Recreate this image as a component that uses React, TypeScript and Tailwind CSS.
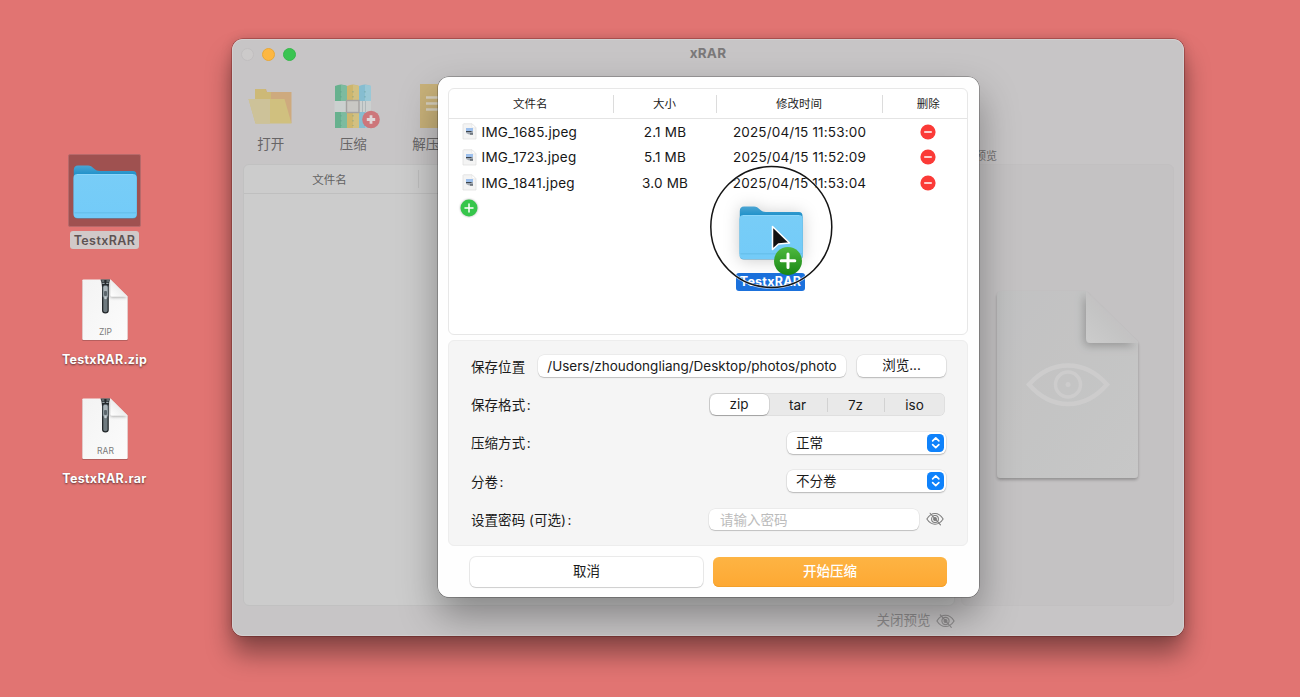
import React from "react";

function Folder({ id, className }: { id: string; className: string }) {
  return (
    <svg className={className} viewBox="0 0 64 54" fill="none">
      <defs>
        <linearGradient id={id + "b"} x1="0" y1="0" x2="0" y2="1">
          <stop offset="0" stopColor="#4ba5d3" />
          <stop offset="0.18" stopColor="#2292ca" />
          <stop offset="1" stopColor="#2292ca" />
        </linearGradient>
        <linearGradient id={id + "f"} x1="0" y1="0" x2="0" y2="1">
          <stop offset="0" stopColor="#78cdf7" />
          <stop offset="1" stopColor="#73cbf8" />
        </linearGradient>
      </defs>
      <path d="M0.800 5Q0.800 0.500 5 0.500H15C20 0.500 21 6 27 6H60Q63.500 6 63.500 10V48H0.800Z" fill={`url(#${id}b)`} />
      <rect x="0.800" y="9.300" width="63" height="44.200" rx="4" fill="#4c98bd" />
      <rect x="0.500" y="9" width="63.300" height="44" rx="4" fill={`url(#${id}f)`} />
      <path d="M1.500 47.800H63" stroke="#5fb9e5" strokeWidth="0.800" />
      <path d="M4 9.500H60" stroke="#9adcfb" strokeWidth="0.600" />
    </svg>
  );
}

function ArchiveFile({ id, kind }: { id: string; kind: string }) {
  return (
    <svg className="h-[64px] w-[50px]" viewBox="0 0 50 64">
      <defs>
        <linearGradient id={id + "p"} x1="0" y1="0" x2="1" y2="1">
          <stop offset="0" stopColor="#f3f3f3" />
          <stop offset="1" stopColor="#fcfcfc" />
        </linearGradient>
        <linearGradient id={id + "c"} x1="0" y1="1" x2="0.700" y2="0.300">
          <stop offset="0" stopColor="#ffffff" />
          <stop offset="1" stopColor="#e6e6e6" />
        </linearGradient>
        <filter id={id + "s"} x="-30%" y="-30%" width="160%" height="160%">
          <feDropShadow dx="-0.500" dy="1" stdDeviation="1.400" floodOpacity="0.350" />
        </filter>
        <clipPath id={id + "k"}>
          <path d="M2.300 0H30.500L47.700 17.500V61H2.300Z" />
        </clipPath>
      </defs>
      <path d="M3.500 1.500H31L48 18V60.500Q48 62 46.500 62H3.500Q2 62 2 60.500V3Q2 1.500 3.500 1.500Z" fill="#8c4a49" opacity="0.500" />
      <path d="M3.500 0.500H30.500L47.700 17.500V60Q47.700 61 46.500 61H3.500Q2.300 61 2.300 60V1.500Q2.300 0.500 3.500 0.500Z" fill={`url(#${id}p)`} />
      <g clipPath={`url(#${id}k)`}>
        <path d="M30.500 0.500V16Q30.500 17.500 32.500 17.500H47.700Z" fill={`url(#${id}c)`} filter={`url(#${id}s)`} />
      </g>
      <path d="M20.500 0.500H30Q28.800 4 28.800 8V31.500Q28.800 34.500 25.400 34.500Q22 34.500 22 31.500V8Q22 4 20.500 0.500Z" fill="#23282b" />
      <path d="M23.300 15H27.500V31.500Q27.500 33.300 25.400 33.300Q23.300 33.300 23.300 31.500Z" fill="#6f7a7f" />
      <path d="M21.500 2H24.300M26.500 2H29M22.300 4.400H24.600M26.200 4.400H28.500" stroke="#98a3a8" strokeWidth="1.200" />
      <rect x="23" y="6.500" width="5" height="12.500" rx="1.800" fill="#aab4b9" stroke="#56646c" strokeWidth="0.700" />
      <rect x="24" y="12" width="3" height="5" rx="1" fill="#5c676d" />
      <circle cx="25.500" cy="19" r="1.300" fill="#c5ced2" />
      <text x="25.500" y="56" textAnchor="middle" className="text-[8.500px] font-normal tracking-normal [text-shadow:none]" fill="#7b7b7b">{kind}</text>
    </svg>
  );
}

function EyeOff({ className }: { className: string }) {
  return (
    <svg className={className} viewBox="0 0 19 14" fill="none" stroke="currentColor" strokeWidth="1.100" strokeLinecap="round">
      <path d="M0.900 7Q4.500 1.300 9.500 1.300T18.100 7Q14.500 12.500 9.500 12.500T0.900 7Z" />
      <circle cx="9.500" cy="7" r="3.600" />
      <circle cx="9.500" cy="7" r="1.500" fill="currentColor" />
      <path d="M4.300 0.900L15.300 13.300" />
    </svg>
  );
}

function OpenIcon() {
  return (
    <svg className="mr-[2px] mb-[2px] h-[46px] w-[46px]" viewBox="0 0 46 46">
      <path d="M8 6H19L20 9H44.500V40H17Z" fill="#ceaa7e" />
      <path d="M8 6H18.500L19.500 9H24L24 40H8Z" fill="#cdb977" />
      <path d="M1.500 16H37.500L44.500 40.500H8.500Z" fill="#d0c07f" />
      <path d="M1.500 16H23V40.500H8.500Z" fill="#cdc299" />
    </svg>
  );
}

function CompressIcon() {
  const cols = [
    { x: 1, a: "#67b18e", b: "#7cbb9f" },
    { x: 13, a: "#cdb66d", b: "#d2c081" },
    { x: 25, a: "#86bdd0", b: "#9ac8d6" },
  ];
  return (
    <svg className="ml-[8px] h-[48px] w-[47px]" viewBox="0 0 47 48">
      {cols.map((c) => (
        <g key={c.x}>
          <path d={`M${c.x} 3Q${c.x + 6} 0 ${c.x + 12} 3V45H${c.x}Z`} fill={c.a} />
          <path d={`M${c.x + 6} 2Q${c.x + 9} 1.500 ${c.x + 12} 3V45H${c.x + 6}Z`} fill={c.b} />
          <path d={`M${c.x + 6} 8V17M${c.x + 6} 32V43`} stroke="#5f948f" strokeOpacity="0.600" strokeWidth="0.900" strokeDasharray="1.500 3.500" />
        </g>
      ))}
      <rect x="0.500" y="18" width="36.500" height="11" fill="#cbd0cf" />
      <rect x="12.500" y="17.500" width="12.500" height="12" fill="#c9c8c4" stroke="#a4a2a0" strokeWidth="1.400" />
      <path d="M28.500 18V29M31.500 18V29" stroke="#abb5b8" strokeWidth="0.900" />
      <circle cx="37" cy="36.500" r="8.800" fill="#cd767a" />
      <path d="M37 32.300V40.700M32.800 36.500H41.200" stroke="#dfd7d8" strokeWidth="2.800" />
    </svg>
  );
}

function ExtractIcon() {
  return (
    <svg className="mb-[2px] h-[46px] w-[46px]" viewBox="0 0 46 46">
      <path d="M4 1H42V45H4Z" fill="#c9b27a" />
      <path d="M10 14.500H30M10 20.500H30M10 26.500H30" stroke="#d7d1c0" strokeWidth="2.600" />
    </svg>
  );
}

function ToolItem({ icon, label, offset }: { icon: React.ReactNode; label: string; offset: string }) {
  return (
    <div className={"flex w-[82.500px] shrink-0 flex-col items-center " + offset}>
      <div className="flex h-[48px] items-center">{icon}</div>
      <span className="mt-[5px] text-[13.500px] leading-[17px] text-[#676566]">{label}</span>
    </div>
  );
}

function JpegIcon() {
  return (
    <svg className="h-[17px] w-[15px]" viewBox="0 0 15 17">
      <path d="M1.500 0.800H10L14 4.800V16H1V1.300Z" fill="#f4f4f4" stroke="#dcdcdc" strokeWidth="0.700" />
      <path d="M10 0.800V4.800H14Z" fill="#fff" stroke="#dedede" strokeWidth="0.500" />
      <rect x="4" y="5" width="7" height="3.500" fill="#9cbfec" />
      <path d="M4 8H11V11.500H7L4 10Z" fill="#a3abb5" />
      <path d="M4 8.500H9.500M8 11H11" stroke="#3c444c" strokeWidth="1" />
    </svg>
  );
}

const files = [
  { name: "IMG_1685.jpeg", size: "2.1 MB", time: "2025/04/15 11:53:00" },
  { name: "IMG_1723.jpeg", size: "5.1 MB", time: "2025/04/15 11:52:09" },
  { name: "IMG_1841.jpeg", size: "3.0 MB", time: "2025/04/15 11:53:04" },
];

function FileTable() {
  return (
    <div className="h-[247px] rounded-[6px] border border-[#e7e7e7] bg-white">
      <div className="grid h-[30px] grid-cols-[164.500px_103px_166px_1fr] items-center border-b border-[#e4e4e4] text-center text-[11.500px] text-[#1c1c1c]">
        <div className="h-[18px] border-r border-[#dcdcdc] pr-[1px] leading-[18px]">文件名</div>
        <div className="h-[18px] border-r border-[#dcdcdc] leading-[18px]">大小</div>
        <div className="h-[18px] border-r border-[#dcdcdc] leading-[18px]">修改时间</div>
        <div className="pl-[7px] leading-[18px]">删除</div>
      </div>
      {files.map((f) => (
        <div key={f.name} className="grid h-[25.500px] grid-cols-[164.500px_103px_166px_1fr] items-center text-center text-[13.500px] tracking-[0.170px] text-[#161616]">
          <div className="flex items-center gap-[5px] pl-[12.500px]">
            <JpegIcon />
            <span className="tracking-[0.260px]">{f.name}</span>
          </div>
          <div className="tracking-[0.200px]">{f.size}</div>
          <div className="whitespace-nowrap">{f.time}</div>
          <div className="flex justify-center pl-[7px]">
            <svg className="h-[16px] w-[16px]" viewBox="0 0 16 16">
              <circle cx="8" cy="8" r="7.600" fill="#fb3a37" />
              <path d="M4.700 8H11.300" stroke="#fff" strokeWidth="1.400" strokeLinecap="round" />
            </svg>
          </div>
        </div>
      ))}
      <svg className="mt-[2.500px] ml-[9.500px] h-[20px] w-[20px] drop-shadow-[0_0_1px_rgba(0,0,0,0.350)]" viewBox="0 0 20 20">
        <circle cx="10" cy="10" r="8.500" fill="#36c64b" />
        <path d="M10 6V14M6 10H14" stroke="#fff" strokeWidth="1.500" strokeLinecap="round" />
      </svg>
    </div>
  );
}

function Select({ value }: { value: string }) {
  return (
    <div className="flex h-[22px] w-[159px] items-center justify-between rounded-[6px] bg-white pr-[2px] pl-[9px] shadow-[0_0_0_0.500px_rgba(0,0,0,0.090),0_1px_1.500px_rgba(0,0,0,0.220)]">
      <span>{value}</span>
      <svg className="h-[17.500px] w-[17.500px] rounded-[4.500px] bg-[#0f82fb]" viewBox="0 0 18 18" fill="none" stroke="#fff" strokeWidth="1.700" strokeLinecap="round" strokeLinejoin="round">
        <path d="M5.800 7L9 3.900L12.200 7M5.800 11L9 14.100L12.200 11" />
      </svg>
    </div>
  );
}

function Row({ label, colon, children }: { label: string; colon?: boolean; children: React.ReactNode }) {
  return (
    <div className="flex h-[38.200px] items-center justify-between">
      <span className="pt-[1px] tracking-[0.050px] whitespace-pre">
        {label}
        {colon && <span className="ml-[1.500px]">:</span>}
      </span>
      {children}
    </div>
  );
}

function SettingsForm() {
  return (
    <div className="mt-[5px] h-[206px] rounded-[6px] border border-[#ededed] bg-[#f5f5f5] pt-[6.500px] pr-[21px] pl-[22px] text-[13.500px] text-[#1a1a1a]">
      <Row label="保存位置">
        <div className="flex gap-[11px] pb-[1px]">
          <div className="h-[22px] w-[308px] overflow-hidden rounded-[6px] bg-white text-center leading-[22px] whitespace-nowrap shadow-[0_0_0_0.500px_rgba(0,0,0,0.080),0_1px_1px_rgba(0,0,0,0.180)]">
            /Users/zhoudongliang/Desktop/photos/photo
          </div>
          <div className="h-[22px] w-[89px] rounded-[6px] bg-white text-center leading-[21px] shadow-[0_0_0_0.500px_rgba(0,0,0,0.090),0_1px_1.500px_rgba(0,0,0,0.220)]">浏览...</div>
        </div>
      </Row>
      <Row label="保存格式" colon>
        <div className="mr-[1px] flex h-[23px] w-[236.500px] items-center rounded-[6px] bg-[#e9e9e9] text-center shadow-[inset_0_0_0_0.500px_rgba(0,0,0,0.080)]">
          <div className="ml-[1px] h-[21px] w-[59px] rounded-[6px] bg-white leading-[20px] shadow-[0_0_0_0.500px_rgba(0,0,0,0.150),0_1px_1px_rgba(0,0,0,0.220)]">zip</div>
          <div className="h-[14px] w-[59px] border-r border-[#d2d2d2] leading-[14px]">tar</div>
          <div className="h-[14px] w-[57px] border-r border-[#d2d2d2] leading-[14px]">7z</div>
          <div className="h-[14px] w-[60px] leading-[14px]">iso</div>
        </div>
      </Row>
      <Row label="压缩方式" colon><Select value="正常" /></Row>
      <Row label="分卷" colon><Select value="不分卷" /></Row>
      <Row label="设置密码 (可选)" colon>
        <div className="flex items-center gap-[7px] pr-[2px]">
          <div className="h-[21.500px] w-[210px] rounded-[6px] bg-white pl-[11px] leading-[22px] text-[#bcbcbc] shadow-[0_0_0_0.500px_rgba(0,0,0,0.080),0_1px_1px_rgba(0,0,0,0.180)]">请输入密码</div>
          <EyeOff className="h-[14px] w-[18px] text-[#7c7c7c]" />
        </div>
      </Row>
    </div>
  );
}

function PreviewPage() {
  return (
    <svg className="mt-[1px] h-[200px] w-[160px] opacity-90" viewBox="0 0 160 200">
      <defs>
        <linearGradient id="page" x1="0" y1="0" x2="1" y2="1">
          <stop offset="0" stopColor="#c1c2c2" />
          <stop offset="1" stopColor="#c8c8c8" />
        </linearGradient>
        <linearGradient id="curl" x1="0" y1="1" x2="0.600" y2="0.400">
          <stop offset="0" stopColor="#cdcdcd" />
          <stop offset="1" stopColor="#c1c1c1" />
        </linearGradient>
        <filter id="pageShadow" x="-20%" y="-20%" width="140%" height="140%">
          <feDropShadow dx="0" dy="2" stdDeviation="1.600" floodOpacity="0.280" />
        </filter>
        <filter id="curlShadow" x="-50%" y="-50%" width="200%" height="200%">
          <feDropShadow dx="-2" dy="3" stdDeviation="4" floodOpacity="0.250" />
        </filter>
        <clipPath id="pageClip">
          <path d="M9 5H98L150 57V192H9Z" />
        </clipPath>
      </defs>
      <path d="M14 5H98L150 56V188Q150 192 146 192H13Q9 192 9 188V10Q9 5 14 5Z" fill="url(#page)" filter="url(#pageShadow)" />
      <g clipPath="url(#pageClip)">
        <path d="M98 5L150 57H103Q98 57 98 52Z" fill="url(#curl)" filter="url(#curlShadow)" />
      </g>
      <g fill="none" stroke="#cecece" strokeWidth="4.500">
        <path d="M41 98.500Q58 79.500 80 79.500T119 98.500Q102 118 80 118T41 98.500Z" />
        <circle cx="80" cy="98.500" r="12.500" strokeWidth="3.500" />
      </g>
      <circle cx="80" cy="98.500" r="2.500" fill="#cecece" />
    </svg>
  );
}

function MainWindow() {
  return (
    <div className="absolute top-[39px] left-[232px] flex h-[597px] w-[952px] flex-col overflow-hidden rounded-[11px] bg-[#c7c5c6]">
      <div className="grid h-[30px] shrink-0 grid-cols-3 items-center">
        <div className="flex gap-[8px] pl-[9px]">
          <span className="size-[13px] rounded-full border border-[#c0bebf] bg-[#cccaca]" />
          <span className="size-[13px] rounded-full border border-[#e9a837] bg-[#fdb741]" />
          <span className="size-[13px] rounded-full border border-[#36b84b] bg-[#3ac451]" />
        </div>
        <span className="pb-[1px] text-center text-[13.500px] font-bold tracking-[0.200px] text-[#7b797a]">xRAR</span>
      </div>
      <div className="mt-[14px] flex h-[81px] shrink-0">
        <ToolItem icon={<OpenIcon />} label="打开" offset="-ml-[2.500px]" />
        <ToolItem icon={<CompressIcon />} label="压缩" offset="" />
        <ToolItem icon={<ExtractIcon />} label="解压文件" offset="ml-[3.500px]" />
        <span className="mt-auto mr-[187px] ml-auto text-[11px] leading-[15px] text-[#737172]">预览</span>
      </div>
      <div className="flex h-[442px] shrink-0 gap-[6px] pr-[10px] pl-[11px]">
        <div className="w-[712px] rounded-[6px] border border-[#c1c1c1] bg-[#cccccc]">
          <div className="flex h-[29px] items-center border-b border-[#bfbfbf] text-[11.500px] text-[#626262]">
            <div className="h-[18px] w-[175px] border-r border-[#bdbdbd] pr-[3px] text-center leading-[20px]">文件名</div>
          </div>
        </div>
        <div className="flex flex-1 items-center justify-center rounded-[6px] border border-[#c2c0c1] bg-[#c4c2c3] ">
          <PreviewPage />
        </div>
      </div>
      <div className="flex flex-1 items-center justify-end gap-[5px] pr-[229.500px] pb-[1px] text-[13.500px] text-[#8f8d8e]">
        <span>关闭预览</span>
        <EyeOff className="h-[14px] w-[19px]" />
      </div>
    </div>
  );
}

function DragGhost() {
  return (
    <div className="absolute top-[165px] left-[710px] h-[130px] w-[124px]">
      <div className="absolute top-[108px] left-[26px] h-[18px] w-[69px] rounded-[3px] bg-[#1b71dc] text-center text-[12.500px] leading-[18px] font-bold tracking-[0.250px] text-white">TestxRAR</div>
      <Folder id="drag" className="absolute top-[41px] left-[29px] h-[54px] w-[64px] drop-shadow-[0_1px_8px_rgba(0,0,0,0.200)]" />
      <svg className="absolute inset-0 h-[130px] w-[124px]" viewBox="0 0 124 130" fill="none">
        <defs>
          <linearGradient id="add" x1="0" y1="0" x2="0" y2="1">
            <stop offset="0" stopColor="#4fb93f" />
            <stop offset="1" stopColor="#178615" />
          </linearGradient>
        </defs>
        <circle cx="61.300" cy="62" r="60.500" stroke="#fff" strokeWidth="2.600" strokeOpacity="0.700" />
        <circle cx="61.300" cy="62" r="60.500" stroke="#151515" strokeWidth="1.500" />
        <circle cx="78" cy="96" r="14" fill="url(#add)" />
        <path d="M78 89V102.500M71.200 95.700H84.800" stroke="#fff" strokeWidth="3" strokeLinecap="round" />
        <path d="M62.500 61.500V84.500L68.500 79L79.500 78Z" fill="#111" stroke="#fff" strokeWidth="1.500" strokeLinejoin="round" />
      </svg>
    </div>
  );
}

export default function App() {
  return (
    <div className="relative h-[697px] w-[1300px] overflow-hidden bg-[#e17472] font-['Inter','Noto_Sans_CJK_SC',sans-serif]">
      <div className="absolute top-[154px] left-[44px] flex w-[121px] flex-col items-center">
        <div className="flex h-[73px] w-[73px] items-center justify-center rounded-[2px] border border-[#b8696a] bg-[#9f5150] pt-[3px]">
          <Folder id="desk" className="h-[54px] w-[64px]" />
        </div>
        <span className="mt-[4px] h-[18px] w-[69px] rounded-[3px] bg-[#d1c9c9] text-center text-[12.500px] leading-[19px] font-semibold tracking-[0.400px] text-[#5d5353]">TestxRAR</span>
      </div>
      <div className="absolute top-[279px] left-[44px] flex w-[121px] flex-col items-center text-[12.500px] font-bold tracking-[0.260px] text-white [text-shadow:0_1px_2px_rgba(0,0,0,0.600)]">
        <ArchiveFile id="zip" kind="ZIP" />
        <span className="mt-[8px] leading-[18px]">TestxRAR.zip</span>
      </div>
      <div className="absolute top-[398px] left-[44px] flex w-[121px] flex-col items-center text-[12.500px] font-bold tracking-[0.300px] text-white [text-shadow:0_1px_2px_rgba(0,0,0,0.600)]">
        <ArchiveFile id="rar" kind="RAR" />
        <span className="mt-[8px] leading-[18px]">TestxRAR.rar</span>
      </div>

      <div className="absolute top-[39px] left-[232px] h-[597px] w-[952px] rounded-[11px] shadow-[0_0_0_0.500px_rgba(60,0,0,0.500),0_18px_26px_rgba(0,0,0,0.400),0_0_12px_rgba(0,0,0,0.150)]" />
      <MainWindow />
      <div className="pointer-events-none absolute top-[39px] left-[232px] h-[597px] w-[952px] overflow-hidden rounded-[11px] shadow-[inset_0_0_0_0.800px_rgba(255,255,255,0.250)]">
        <div className="absolute top-[38px] left-[206px] h-[520px] w-[541px] rounded-[11px] shadow-[0_0_0_0.500px_rgba(0,0,0,0.450),0_18px_38px_rgba(0,0,0,0.350)]" />
      </div>
      <div className="absolute top-[77px] left-[438px] flex h-[520px] w-[541px] flex-col rounded-[11px] bg-[#fefefe] pt-[11px] pr-[11px] pl-[10px]">
        <FileTable />
        <SettingsForm />
        <div className="mt-[11px] flex gap-[10px] pr-[10px] pl-[22px] text-center text-[13.500px] leading-[29px]">
          <div className="h-[30px] w-[233px] rounded-[6px] bg-white text-[#1a1a1a] shadow-[0_0_0_1px_rgba(0,0,0,0.080),0_1px_1px_rgba(0,0,0,0.120)]">取消</div>
          <div className="h-[30px] w-[234px] rounded-[6px] bg-linear-to-b from-[#fdb443] to-[#fda833] font-medium text-white shadow-[inset_0_-1px_0_#f3a02b]">开始压缩</div>
        </div>
      </div>
      <DragGhost />
    </div>
  );
}
